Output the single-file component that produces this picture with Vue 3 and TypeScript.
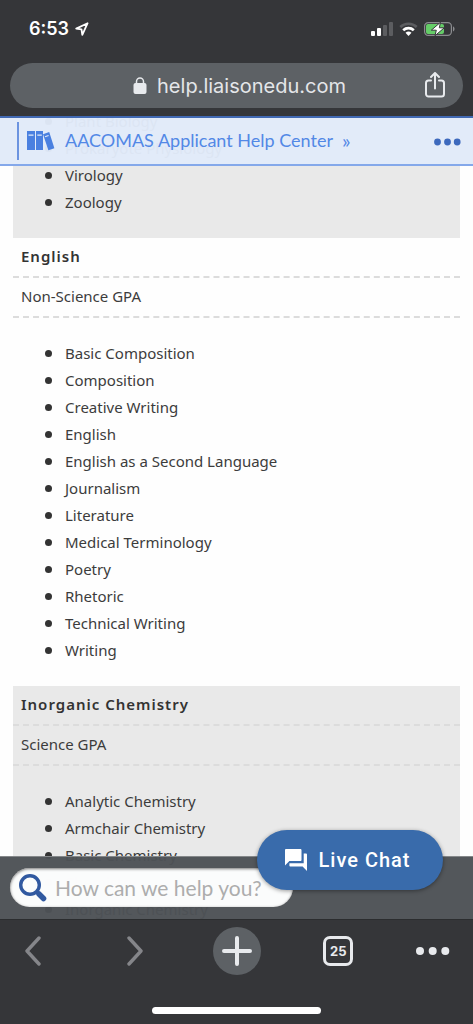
<script setup lang="ts">
import { ref } from 'vue'

interface SubjectGroup {
  title?: string
  gpa?: string
  shaded: boolean
  courses: string[]
}

const groups: SubjectGroup[] = [
  {
    shaded: true,
    courses: ['Plant Biology', 'Prokaryote Physiology', 'Virology', 'Zoology'],
  },
  {
    title: 'English',
    gpa: 'Non-Science GPA',
    shaded: false,
    courses: [
      'Basic Composition',
      'Composition',
      'Creative Writing',
      'English',
      'English as a Second Language',
      'Journalism',
      'Literature',
      'Medical Terminology',
      'Poetry',
      'Rhetoric',
      'Technical Writing',
      'Writing',
    ],
  },
  {
    title: 'Inorganic Chemistry',
    gpa: 'Science GPA',
    shaded: true,
    courses: [
      'Analytic Chemistry',
      'Armchair Chemistry',
      'Basic Chemistry',
      'Chemistry',
      'Inorganic Chemistry',
    ],
  },
]

const query = ref('')
const tabCount = 25
</script>

<template>
  <div class="screen">
    <header class="chrome">
      <div class="status">
        <div class="clock">
          <span>6:53</span>
          <svg width="14" height="14" viewBox="0 0 14 14" aria-hidden="true">
            <path d="M12.600 1.200 1.200 6.600l5.300.8.8 5.400z" fill="none" stroke="#fff" stroke-width="1.800" stroke-linejoin="round" />
          </svg>
        </div>
        <div class="signals">
          <svg width="22" height="14" viewBox="0 0 22 14" aria-hidden="true">
            <rect x="0" y="9" width="4" height="5" rx="1" fill="#fff" />
            <rect x="6" y="6" width="4" height="8" rx="1" fill="#fff" />
            <rect x="12" y="3" width="4" height="11" rx="1" fill="#5c5d60" />
            <rect x="18" y="0" width="4" height="14" rx="1" fill="#5c5d60" />
          </svg>
          <svg width="19" height="14" viewBox="0 0 19 14" aria-hidden="true">
            <path d="M1.300 5a12 12 0 0 1 16.400 0" fill="none" stroke="#5c5d60" stroke-width="2.700" />
            <path d="M4.200 8.300a7.800 7.800 0 0 1 10.600 0" fill="none" stroke="#fff" stroke-width="2.700" />
            <path d="M6.500 10.800a4.500 4.500 0 0 1 6 0l-3 3.100z" fill="#fff" />
          </svg>
          <svg width="31" height="14" viewBox="0 0 31 14" aria-hidden="true">
            <rect x=".6" y=".6" width="26.800" height="12.800" rx="3.600" fill="none" stroke="#8b8c8f" stroke-width="1.200" />
            <rect x="2" y="2" width="18" height="10" rx="2" fill="#65cd68" />
            <path d="M29 4.600c2 .6 2 4.200 0 4.800z" fill="#8b8c8f" />
            <path d="M16.500 .3 7.300 8.200h5L11 13.700 20.300 5.800h-5z" fill="#fff" stroke="#353639" stroke-width="1" />
          </svg>
        </div>
      </div>
      <div class="address">
        <a class="url" href="#">
          <svg width="14" height="17" viewBox="0 0 14 17" aria-hidden="true">
            <rect x=".5" y="6" width="13" height="11" rx="2" fill="#e8eaed" />
            <path d="M3.500 7V4.500a3.500 3.500 0 0 1 7 0V7" fill="none" stroke="#e8eaed" stroke-width="1.500" />
          </svg>
          <span>help.liaisonedu.com</span>
        </a>
        <button class="share" type="button" aria-label="Share">
          <svg width="20" height="26" viewBox="0 0 20 26" fill="none" stroke="#e8eaed" stroke-width="2" stroke-linecap="round" stroke-linejoin="round" aria-hidden="true">
            <path d="M6 8.500H3.500A2.500 2.500 0 0 0 1 11v11a2.500 2.500 0 0 0 2.500 2.500h13A2.500 2.500 0 0 0 19 22V11a2.500 2.500 0 0 0-2.500-2.500H14" />
            <path d="M10 16.500V1.500M6 5l4-4 4 4" />
          </svg>
        </button>
      </div>
    </header>

    <main class="page">
      <article class="subjects">
        <section v-for="(group, i) in groups" :key="i" class="group" :class="{ shaded: group.shaded }">
          <h2 v-if="group.title">{{ group.title }}</h2>
          <p v-if="group.gpa">{{ group.gpa }}</p>
          <ul>
            <li v-for="course in group.courses" :key="course">{{ course }}</li>
          </ul>
        </section>
      </article>

      <nav class="helpbar">
        <a class="brand" href="#">
          <svg width="28" height="20" viewBox="0 0 28 20" fill="#4a80e0" aria-hidden="true">
            <path fill-rule="evenodd" d="M0 0h8v19H0zM1.500 3.500v1.200h5V3.500z" />
            <path fill-rule="evenodd" d="M9 0h7v19H9zM10.300 3.500v1.200h4.500V3.500z" />
            <path fill-rule="evenodd" d="M16 3.200 22.200 1l5.200 16.200-6 2zM17.800 5.200l.4 1 3.600-1.200-.4-1z" />
          </svg>
          <span>AACOMAS Applicant Help Center</span>
          <span class="more">»</span>
        </a>
        <button class="menu" type="button" aria-label="Menu">
          <svg width="27" height="8" viewBox="0 0 27 8" fill="#3d69bd" aria-hidden="true">
            <circle cx="3.500" cy="4" r="3.400" />
            <circle cx="13.500" cy="4" r="3.400" />
            <circle cx="23.200" cy="4" r="3.400" />
          </svg>
        </button>
      </nav>

      <form class="searchbar" role="search" @submit.prevent>
        <label class="field">
          <svg width="28" height="28" viewBox="0 0 28 28" fill="none" stroke="#3159a0" aria-hidden="true">
            <circle cx="11" cy="11" r="9.300" stroke-width="3.400" />
            <path d="M17.500 17.500 20 20" stroke-width="3.500" />
            <path d="m20 20 4.500 4.500" stroke-width="5.500" stroke-linecap="round" />
          </svg>
          <input v-model="query" type="text" placeholder="How can we help you?" aria-label="How can we help you?" />
        </label>
      </form>

      <button class="chat" type="button">
        <svg width="22" height="22" viewBox="2 2 20 20" fill="#fff" aria-hidden="true">
          <path d="M21 6h-2v9H6v2c0 .55.45 1 1 1h11l4 4V7c0-.55-.45-1-1-1zm-4 6V3c0-.55-.45-1-1-1H3c-.55 0-1 .45-1 1v14l4-4h10c.55 0 1-.45 1-1z" />
        </svg>
        <span>Live Chat</span>
      </button>
    </main>

    <footer class="toolbar">
      <div class="tools">
        <button type="button" aria-label="Back">
          <svg width="16" height="30" viewBox="0 0 16 30" fill="none" stroke="#85868a" stroke-width="3.400" stroke-linecap="round" stroke-linejoin="round" aria-hidden="true">
            <path d="M14 2 2 15l12 13" />
          </svg>
        </button>
        <button type="button" aria-label="Forward">
          <svg width="16" height="30" viewBox="0 0 16 30" fill="none" stroke="#85868a" stroke-width="3.400" stroke-linecap="round" stroke-linejoin="round" aria-hidden="true">
            <path d="m2 2 12 13L2 28" />
          </svg>
        </button>
        <button class="add" type="button" aria-label="New tab">
          <svg width="30" height="30" viewBox="0 0 30 30" stroke="#e8eaed" stroke-width="4" stroke-linecap="round" aria-hidden="true">
            <path d="M15 2v26M2 15h26" />
          </svg>
        </button>
        <button type="button" aria-label="Tabs">
          <span class="tabs">{{ tabCount }}</span>
        </button>
        <button class="options" type="button" aria-label="Options">
          <svg width="34" height="8" viewBox="0 0 34 8" fill="#e8eaed" aria-hidden="true">
            <circle cx="4" cy="4" r="4" />
            <circle cx="16.700" cy="4" r="4" />
            <circle cx="29.300" cy="4" r="4" />
          </svg>
        </button>
      </div>
      <div class="home"></div>
    </footer>
  </div>
</template>

<style>
body {
  margin: 0;
  background: #fefefe;
}
</style>

<style scoped>
.screen {
  display: flex;
  flex-direction: column;
  height: 100vh;
  overflow: hidden;
  background: #fefefe;
  font-family: "Noto Sans", sans-serif;
}

button {
  display: flex;
  align-items: center;
  justify-content: center;
  padding: 0;
  border: 0;
  background: none;
  cursor: pointer;
}

a {
  text-decoration: none;
}

svg {
  display: block;
  flex: none;
}

.chrome {
  flex: none;
  padding: 0 10px 8px;
  background: #353639;
}

.status {
  display: flex;
  align-items: center;
  justify-content: space-between;
  height: 63px;
  padding: 0 8px 5px 19px;
  box-sizing: border-box;
}

.clock {
  display: flex;
  align-items: center;
  gap: 6px;
  color: #fff;
  font: 600 18px/24px Inter, sans-serif;
}

.signals {
  display: flex;
  gap: 6px;
}

.address {
  display: grid;
  grid-template-columns: 1fr auto 1fr;
  align-items: center;
  height: 45px;
  padding: 0 18px;
  border-radius: 23px;
  background: #5d6165;
}

.url {
  grid-column: 2;
  display: flex;
  align-items: center;
  gap: 10px;
  padding-left: 6px;
  color: #e4e6e9;
  font: 400 20px/28px Inter, sans-serif;
}

.share {
  justify-self: end;
  padding-bottom: 2px;
}

.page {
  position: relative;
  flex: 1;
  min-height: 0;
  overflow: hidden;
}

.subjects {
  margin: -8px 13px 0;
  color: #3c3c3c;
}

.group.shaded {
  background: #e9e9e9;
}

.group h2,
.group p {
  margin: 0;
  padding: 6px 8px 7px;
  border-bottom: 2px dashed #dcdcdc;
  font-size: 15px;
  line-height: 25px;
}

.group h2 {
  color: #333;
  font-weight: 600;
  letter-spacing: 1px;
}

.group ul {
  margin: 0;
  padding: 22px 8px 22px 52px;
  list-style: none;
}

.group:first-child ul {
  padding-top: 0;
}

.group li {
  display: flex;
  align-items: center;
  font-size: 15px;
  line-height: 27px;
}

.group li::before {
  content: "";
  flex: none;
  width: 7px;
  height: 7px;
  margin: 0 13px 0 -20px;
  border-radius: 50%;
  background: #333;
}

.helpbar {
  position: absolute;
  inset: 0 0 auto;
  display: flex;
  align-items: center;
  justify-content: space-between;
  height: 50px;
  box-sizing: border-box;
  padding: 0 12px 0 17px;
  border-top: 2px solid #4169b3;
  border-bottom: 2px solid #84a8ea;
  background: rgba(225, 234, 249, 0.97);
}

.brand {
  display: flex;
  align-items: center;
  height: 38px;
  padding-left: 8px;
  border-left: 2px solid #6b93e0;
  color: #5288e6;
  font: 400 18px/24px Lato, sans-serif;
}

.brand svg {
  margin-right: 10px;
}

.brand span {
  padding-bottom: 3px;
}

.brand .more {
  margin-left: 9px;
  font-size: 20px;
}

.menu {
  padding-top: 2px;
}

.searchbar {
  position: absolute;
  inset: auto 0 0;
  padding: 11px 10px 12px;
  border-top: 1px solid #85888a;
  border-bottom: 1px solid #2b2d2f;
  background: rgba(77, 82, 86, 0.97);
}

.field {
  display: flex;
  align-items: center;
  gap: 8px;
  width: 283px;
  max-width: 100%;
  height: 39px;
  box-sizing: border-box;
  padding: 0 12px 0 9px;
  border-radius: 20px;
  background: rgba(255, 255, 255, 0.98);
  box-shadow: inset 0 1px 3px #777;
}

.field input {
  flex: 1;
  min-width: 0;
  padding: 0;
  border: 0;
  outline: 0;
  background: none;
  color: #444;
  font: 400 21px/28px Lato, sans-serif;
}

.field input::placeholder {
  color: #adadad;
  opacity: 1;
}

.chat {
  position: absolute;
  right: 30px;
  bottom: 30px;
  gap: 12px;
  width: 186px;
  height: 60px;
  padding-right: 5px;
  border-radius: 30px;
  background: #396bab;
  box-shadow: 0 1px 4px rgba(0, 0, 0, 0.4);
  color: #fff;
  font: 500 20px/24px Roboto, sans-serif;
  letter-spacing: 1px;
}

.toolbar {
  flex: none;
  padding: 7px 9px 10px;
  background: #353639;
}

.tools {
  display: flex;
  justify-content: space-between;
  margin-bottom: 32px;
}

.tools button {
  width: 48px;
  height: 48px;
}

.tools .add {
  border-radius: 50%;
  background: #5d6165;
}

.tools .options {
  justify-content: flex-start;
}

.tabs {
  width: 30px;
  height: 30px;
  box-sizing: border-box;
  border: 3px solid #e8eaed;
  border-radius: 7px;
  color: #e8eaed;
  font: 700 13px/24px Inter, sans-serif;
}

.home {
  width: 37%;
  height: 7px;
  margin: 0 auto;
  border-radius: 4px;
  background: #fff;
}
</style>
